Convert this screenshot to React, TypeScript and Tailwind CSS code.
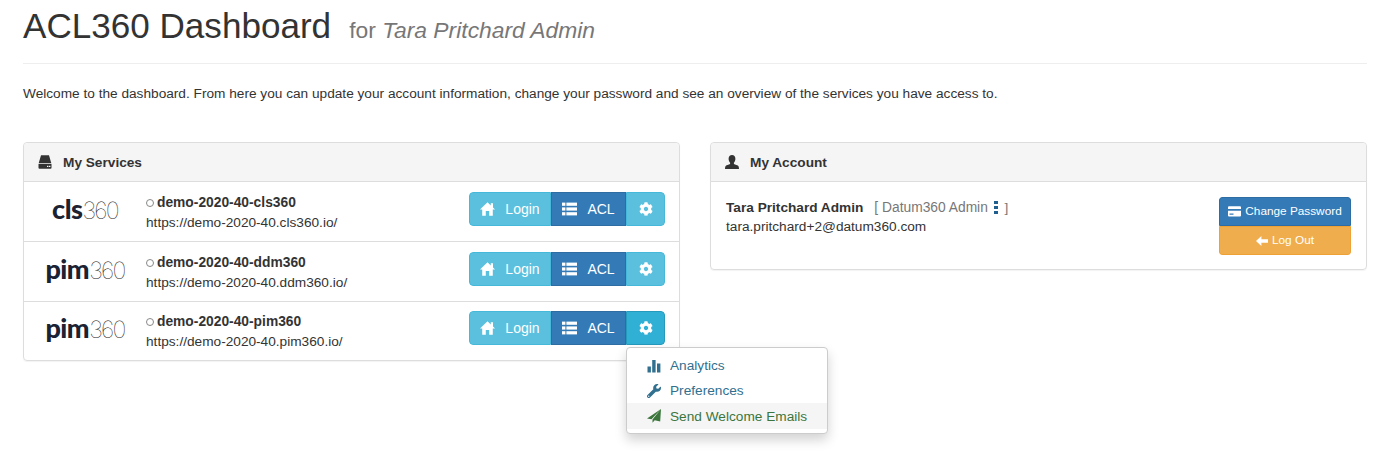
import React from "react";
import { FaCog, FaWrench } from "react-icons/fa";

const HddIcon = () => (
  <svg viewBox="0 0 14 14" className="w-[14px] h-[14px] fill-[#333]">
    <path d="M3 0.2h8l2.3 8H0.7z" />
    <path d="M0.5 9h13v3.8a1 1 0 0 1-1 1h-11a1 1 0 0 1-1-1z" />
    <rect x="9" y="10.8" width="1.4" height="1.2" fill="#fff" />
    <rect x="11" y="10.8" width="1.4" height="1.2" fill="#fff" />
  </svg>
);

const UserIcon = () => (
  <svg viewBox="0 0 14 14" className="w-[14px] h-[14px] fill-[#333]">
    <path d="M7 0c2.1 0 3.4 1.5 3.4 3.7 0 1.7-.7 3.2-1.5 4v1.1c0 .5 3.4 1.3 4.4 2.2.5.5.7 1.900.7 3H0c0-1.100.2-2.500.7-3 1-.9 4.400-1.700 4.400-2.200V7.700c-.8-.8-1.500-2.300-1.500-4C3.600 1.500 4.900 0 7 0z" />
  </svg>
);

const HomeIcon = () => (
  <svg viewBox="0 0 15 14" className="w-[15px] h-[14px] fill-white">
    <path d="M7.500 0.300L10.800 3.500V1.200h2.200v4.400L15 7.600h-2.200V13.800H9.200V9H5.800v4.800H2.200V7.600H0z" />
  </svg>
);

const ListIcon = () => (
  <svg viewBox="0 0 15 14" className="w-[15px] h-[14px] fill-white">
    <rect x="0" y="0.6" width="3.4" height="3.2" />
    <rect x="4.400" y="0.6" width="10.6" height="3.2" />
    <rect x="0" y="5.400" width="3.4" height="3.2" />
    <rect x="4.400" y="5.400" width="10.6" height="3.2" />
    <rect x="0" y="10.200" width="3.4" height="3.2" />
    <rect x="4.400" y="10.200" width="10.6" height="3.2" />
  </svg>
);

const StatsIcon = () => (
  <svg viewBox="0 0 14 14" className="w-[14px] h-[14px] fill-[#31708f]">
    <rect x="0.5" y="7.5" width="3.4" height="6" />
    <rect x="5.2" y="1" width="3.4" height="12.5" />
    <rect x="10" y="4.5" width="3.4" height="9" />
  </svg>
);

const SendIcon = () => (
  <svg viewBox="0 0 14 14" className="w-[14px] h-[14px] fill-[#3c763d]">
    <path d="M14 0L0 9.500l4.500.8L14 0zM14 0L5.500 10.500v3.200l2.200-2.500 5.500 1.300z" />
  </svg>
);

const CardIcon = () => (
  <svg viewBox="0 0 13 11" className="w-[13px] h-[11px] fill-white">
    <path d="M1 0.200h11a1 1 0 0 1 1 1V3H0V1.200a1 1 0 0 1 1-1zM0 4.800h13v4.800a1 1 0 0 1-1 1H1a1 1 0 0 1-1-1zM1.500 7.600v1.200h4V7.600z" />
  </svg>
);

const ArrowLeftIcon = () => (
  <svg viewBox="0 0 12 10" className="w-[12px] h-[10px] fill-white">
    <path d="M5.400 0v3.300H12v3.400H5.400V10L0 5z" />
  </svg>
);

type Service = { logo: string; name: string; url: string };

const services: Service[] = [
  { logo: "cls", name: "demo-2020-40-cls360", url: "https://demo-2020-40.cls360.io/" },
  { logo: "pim", name: "demo-2020-40-ddm360", url: "https://demo-2020-40.ddm360.io/" },
  { logo: "pim", name: "demo-2020-40-pim360", url: "https://demo-2020-40.pim360.io/" },
];

const ServiceRow = ({ service, open }: { service: Service; open: boolean }) => (
  <div className="h-[59.4px] flex items-center border-t border-[#ddd] first:border-t-0 pr-[14px]">
    <div className="w-[122px] mb-[6px] flex justify-center items-baseline text-[#1a2233] leading-none">
      <span className="font-['Lato',sans-serif] font-black text-[27px] tracking-[-0.5px]">{service.logo}</span>
      <span className="font-['Inter',sans-serif] font-thin text-[#222] text-[23.5px] tracking-[-1.8px]">360</span>
    </div>
    <div className="flex-1 pt-[2px] leading-[19.5px]">
      <div className="flex items-center">
        <span className="w-[8px] h-[8px] rounded-full border-[1.5px] border-[#888] mr-[3px]"></span>
        <b className="text-[#333] text-[13.8px]">{service.name}</b>
      </div>
      <div>{service.url}</div>
    </div>
    <div className="flex h-[34px] mb-[5px] text-[14px] text-white rounded-[4px] overflow-hidden">
      <div className="w-[82px] bg-[#5bc0de] border border-[#46b8da] rounded-l-[4px] flex items-center justify-center gap-[10px]">
        <HomeIcon />
        Login
      </div>
      <div className="w-[75px] bg-[#337ab7] border border-[#2e6da4] flex items-center justify-center gap-[10px]">
        <ListIcon />
        ACL
      </div>
      <div className={`w-[39px] border rounded-r-[4px] flex items-center justify-center ${open ? "bg-[#31b0d5] border-[#269abc]" : "bg-[#5bc0de] border-[#46b8da]"}`}>
        <FaCog className="w-[14px] h-[14px]" />
      </div>
    </div>
  </div>
);

export default function App() {
  return (
    <div className="min-h-screen bg-white text-[#333] text-[13.66px] font-['Liberation_Sans',Arial,sans-serif] pl-[23px] pr-[13px] overflow-hidden">
      <h1 className="text-[35.1px] leading-[40px] pt-[6px] pb-[17px] border-b border-[#eee] h-[64px]">
        ACL360 Dashboard
        <small className="text-[22.85px] text-[#777] ml-[18px]">
          for <i>Tara Pritchard Admin</i>
        </small>
      </h1>

      <p className="mt-[21px] leading-[18px]">
        Welcome to the dashboard. From here you can update your account information, change your password and see an overview of the services you have access to.
      </p>

      <div className="mt-[39px] flex gap-[30px] items-start">
        {/* Services panel */}
        <section className="relative w-[657px] border border-[#ddd] rounded-[4px] shadow-[0_1px_1px_rgba(0,0,0,0.05)]">
          <div className="h-[39px] bg-[#f5f5f5] border-b border-[#ddd] rounded-t-[4px] flex items-center pl-[14px] gap-[11px] font-bold">
            <HddIcon />
            <span className="pt-[3px]">My Services</span>
          </div>
          <div>
            {services.map((s, i) => (
              <ServiceRow key={s.name} service={s} open={i === 2} />
            ))}
          </div>

          {/* Gear dropdown */}
          <div className="absolute left-[602px] top-[204px] w-[202px] h-[87px] bg-white border border-[#ccc] rounded-[4px] shadow-[0_6px_12px_rgba(0,0,0,0.175)] pt-[5px] z-10">
            <div className="h-[25px] flex items-center pl-[20px] gap-[9px] text-[#31708f]">
              <StatsIcon />
              <span className="pt-[2px]">Analytics</span>
            </div>
            <div className="h-[25px] flex items-center pl-[20px] gap-[9px] text-[#31708f]">
              <FaWrench className="w-[14px] h-[14px]" />
              <span className="pt-[2px]">Preferences</span>
            </div>
            <div className="h-[26px] flex items-center pl-[20px] gap-[9px] bg-[#f5f5f5] text-[#3c763d]">
              <SendIcon />
              <span className="pt-[2px]">Send Welcome Emails</span>
            </div>
          </div>
        </section>

        {/* Account panel */}
        <section className="flex-1 border border-[#ddd] rounded-[4px] shadow-[0_1px_1px_rgba(0,0,0,0.05)]">
          <div className="h-[39px] bg-[#f5f5f5] border-b border-[#ddd] rounded-t-[4px] flex items-center pl-[14px] gap-[11px] font-bold">
            <UserIcon />
            <span className="pt-[3px]">My Account</span>
          </div>
          <div className="h-[87px] flex justify-between pl-[15px] pr-[15px] pt-[16px]">
            <div className="leading-[19px]">
              <div className="flex items-center">
                <b>Tara Pritchard Admin</b>
                <span className="ml-[11px] text-[#777] text-[13.8px]">[ Datum360 Admin</span>
                <span className="mx-[6.5px] flex flex-col gap-[2px]">
                  <span className="w-[3.5px] h-[3px] bg-[#1f5f8f]"></span>
                  <span className="w-[3.5px] h-[3px] bg-[#1f5f8f]"></span>
                  <span className="w-[3.5px] h-[3px] bg-[#1f5f8f]"></span>
                </span>
                <span className="text-[#777]">]</span>
              </div>
              <div>tara.pritchard+2@datum360.com</div>
            </div>
            <div className="w-[132px] h-[58px] -mt-[1px] text-[11.8px] text-white rounded-[3px] overflow-hidden">
              <div className="h-[29px] bg-[#337ab7] border border-[#2e6da4] rounded-t-[3px] flex items-center justify-center gap-[4px]">
                <CardIcon />
                Change Password
              </div>
              <div className="h-[29px] bg-[#f0ad4e] border border-[#eea236] rounded-b-[3px] flex items-center justify-center gap-[4px]">
                <ArrowLeftIcon />
                Log Out
              </div>
            </div>
          </div>
        </section>
      </div>
    </div>
  );
}
